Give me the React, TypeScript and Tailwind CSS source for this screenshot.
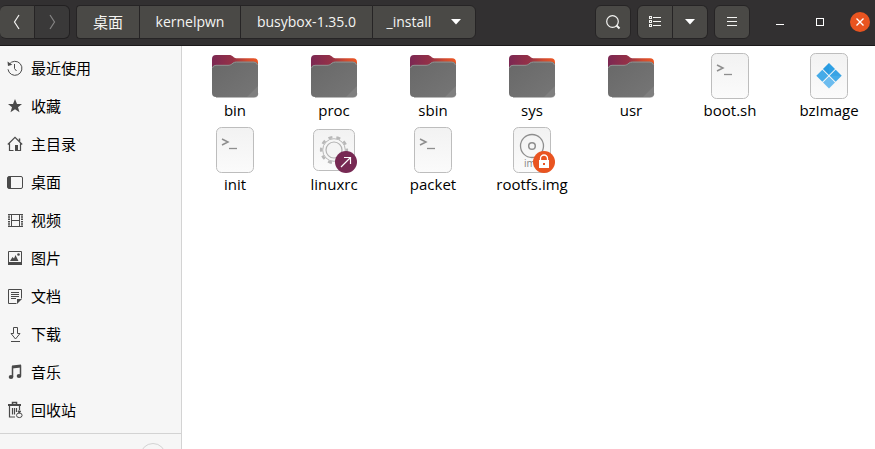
import React from "react";

type Kind = "folder" | "script" | "gear" | "disc" | "exe";

const files: { name: string; kind: Kind }[] = [
  { name: "bin", kind: "folder" },
  { name: "proc", kind: "folder" },
  { name: "sbin", kind: "folder" },
  { name: "sys", kind: "folder" },
  { name: "usr", kind: "folder" },
  { name: "boot.sh", kind: "script" },
  { name: "bzImage", kind: "exe" },
  { name: "init", kind: "script" },
  { name: "linuxrc", kind: "gear" },
  { name: "packet", kind: "script" },
  { name: "rootfs.img", kind: "disc" },
];

const crumbs = [
  { label: "桌面", style: "w-[63px] rounded-l-sm text-[15px]" },
  { label: "kernelpwn", style: "w-[101px]" },
  { label: "busybox-1.35.0", style: "w-[132px]" },
];

const fileGradients = (
  <svg className="absolute" width="0" height="0" aria-hidden="true">
    <defs>
      <linearGradient id="tab" x1="0" y1="0" x2="1" y2="0">
        <stop offset="0" stopColor="#7c2853" />
        <stop offset="0.45" stopColor="#963146" />
        <stop offset="0.75" stopColor="#d04a30" />
        <stop offset="1" stopColor="#ee5722" />
      </linearGradient>
      <linearGradient id="front" x1="0" y1="0" x2="1" y2="1">
        <stop offset="0" stopColor="#686868" />
        <stop offset="1" stopColor="#767676" />
      </linearGradient>
      <linearGradient id="paper" x1="0" y1="0" x2="0" y2="1">
        <stop offset="0" stopColor="#f2f2f2" />
        <stop offset="1" stopColor="#fbfbfb" />
      </linearGradient>
    </defs>
  </svg>
);

const Page = () => (
  <rect x="5.5" y="1.5" width="37" height="45" rx="5" fill="url(#paper)" stroke="#bdbdbd" />
);

function FileIcon({ kind }: { kind: Kind }) {
  return (
    <svg width="48" height="48" viewBox="0 0 48 48" aria-hidden="true" className="block">
      {kind === "folder" && (
        <>
          <path d="M5 3h13c2 0 3 .7 4 1.600l1 .9C24 6 24.500 6.300 26 6.300h17a4 4 0 0 1 4 4V28H1V7a4 4 0 0 1 4-4z" fill="url(#tab)" />
          <path d="M5 45.500h38a4 4 0 0 0 4-4" fill="none" stroke="#b9b9b9" />
          <path d="M5 13h12c2 0 3-.5 4-1.300l1-.9c1-.7 2-1 3.500-1H43a4 4 0 0 1 4 4V41a4 4 0 0 1-4 4H5a4 4 0 0 1-4-4V17a4 4 0 0 1 4-4z" fill="url(#front)" />
          <path d="M1.500 16A3.500 3.500 0 0 1 5 13.300h12c2 0 3-.6 4-1.400l1-.8c1-.7 2-1 3.500-1H43a4 4 0 0 1 3.500 3" fill="none" stroke="#919191" />
          <path d="M47 34v7a4 4 0 0 1-4 4h-7z" fill="#7f7f7f" />
        </>
      )}
      {kind === "script" && (
        <>
          <Page />
          <path d="M11 13l6 3-6 3" fill="none" stroke="#8e8e8e" strokeWidth="1.500" />
          <path d="M18 22.500h8" stroke="#8e8e8e" strokeWidth="1.300" />
        </>
      )}
      {kind === "exe" && (
        <>
          <Page />
          <path d="M24 11l6 6-6 6-6-6z" fill="#2ea0e4" />
          <path d="M17.300 17.700l6 6-6 6-6-6z" fill="#45abe8" />
          <path d="M30.700 17.700l6 6-6 6-6-6z" fill="#45abe8" />
          <path d="M24 24.400l6 6-6 6-6-6z" fill="#6cbcef" />
          <path d="M24 11v12l-6-6zM30.700 17.700l-6 6h12z" fill="#1e93da" opacity=".3" />
        </>
      )}
      {kind === "gear" && (
        <>
          <rect x="3.500" y="3.500" width="41" height="41" rx="5" fill="url(#paper)" stroke="#bdbdbd" />
          <circle cx="24" cy="24" r="12.800" fill="none" stroke="#b8b8b8" strokeWidth="2.600" strokeDasharray="4 4.042" strokeDashoffset="2" />
          <circle cx="24" cy="24" r="11.300" fill="#f6f6f6" stroke="#b8b8b8" strokeWidth="1" />
          <circle cx="24" cy="24" r="8" fill="#f4f4f4" stroke="#b3b3b3" strokeWidth="1.200" />
          <circle cx="36" cy="36" r="11" fill="#772953" />
          <path d="M31 41l9.500-9.500M34 31.500h6.500V38" fill="none" stroke="#fff" strokeWidth="1.200" />
        </>
      )}
      {kind === "disc" && (
        <>
          <Page />
          <circle cx="24" cy="20" r="11.500" fill="none" stroke="#8e8e8e" strokeWidth="1.300" />
          <circle cx="24" cy="20" r="3.300" fill="none" stroke="#8e8e8e" strokeWidth="1.500" />
          <text x="16" y="41" fontSize="10" fill="#858585" fontFamily="Open Sans, sans-serif">img</text>
          <circle cx="36" cy="36" r="11" fill="#e95420" />
          <rect x="31" y="34" width="10" height="8" fill="#fff" />
          <path d="M32.500 34v-1.500a3.500 3.500 0 0 1 7 0V34" fill="none" stroke="#fff" strokeWidth="1.300" />
          <rect x="35" y="37" width="2" height="2" fill="#e95420" />
        </>
      )}
    </svg>
  );
}

const places: { label: string; icon: React.ReactNode }[] = [
  {
    label: "最近使用",
    icon: (
      <>
        <path d="M2.200 4.300A7 7 0 1 1 1 9.300" />
        <path d="M7.500 4v4.500l2 2.500" />
        <path d="M.5 1.500L1 6l4.300-1.300z" fill="#4a4a4a" stroke="none" />
      </>
    ),
  },
  {
    label: "收藏",
    icon: <path d="M8 1l2 5h5l-4 3.200 1.500 5L8 11.200l-4.500 3 1.500-5L1 6h5z" fill="#4a4a4a" stroke="none" />,
  },
  {
    label: "主目录",
    icon: (
      <>
        <path d="M.8 8.500L8 1.300l7.200 7.200M2.500 7.500v7h4M13.500 7.500v7H10" strokeWidth="1.200" />
        <path d="M12.500 2.500v3" strokeWidth="1.500" />
        <path d="M8 9h3v6H8z" fill="#4a4a4a" stroke="none" />
      </>
    ),
  },
  {
    label: "桌面",
    icon: (
      <>
        <rect x=".5" y="2.500" width="15" height="12" rx="1.500" />
        <path d="M1 3h3v11H1z" fill="#4a4a4a" stroke="none" />
      </>
    ),
  },
  {
    label: "视频",
    icon: (
      <>
        <path d="M4.500 2v13M12.500 2v13M1 2.500h15M1 14.500h15M4.500 8.500h8" />
        <path d="M2 2v13M15 2v13" strokeWidth="2" strokeDasharray="1.500 .8" />
      </>
    ),
  },
  {
    label: "图片",
    icon: (
      <>
        <path d="M1.500 1.500h13v12h-13z" />
        <path d="M1 12h14v3H1zM3 11l2.500-4 1.500 1.500L8.500 5l3 6z" fill="#4a4a4a" stroke="none" />
        <circle cx="11.500" cy="4.500" r="1.300" fill="#4a4a4a" stroke="none" />
      </>
    ),
  },
  {
    label: "文档",
    icon: (
      <>
        <path d="M9.500 15.500h-8v-14h13v9M4 4.500h8M4 6.500h8M4 8.500h8M4 10.500h5" />
        <path d="M10 11h5l-5 5z" fill="#4a4a4a" stroke="none" />
      </>
    ),
  },
  {
    label: "下载",
    icon: <path d="M6.500 1.500h4v6H13L8.500 13 4 7.500h2.500zM4 15.500h9" />,
  },
  {
    label: "音乐",
    icon: (
      <>
        <path d="M5.500 13V3l8-1v9.500" strokeWidth="1.500" />
        <path d="M5 1.500l9-1v3l-9 1z" fill="#4a4a4a" stroke="none" />
        <ellipse cx="4" cy="13" rx="2.300" ry="2" fill="#4a4a4a" stroke="none" />
        <ellipse cx="12" cy="12" rx="2.300" ry="2" fill="#4a4a4a" stroke="none" />
      </>
    ),
  },
  {
    label: "回收站",
    icon: (
      <>
        <path d="M5.500 2.500v-2h4v2" strokeWidth="1.500" />
        <path d="M1 2h13v2H1z" fill="#4a4a4a" stroke="none" />
        <path d="M2.500 4v11H8M12.500 4v4M5.500 6v6.500M7.500 6v6.500M9.500 6v4" strokeWidth="1.200" />
        <ellipse cx="12.300" cy="13.300" rx="2.800" ry="2.300" fill="#f6f6f6" />
        <path d="M11 9h2.600l-1.300 2.300z" fill="#4a4a4a" />
      </>
    ),
  },
];

const headerButton =
  "flex h-[34px] items-center justify-center border border-[#262425] bg-[#4a4946] text-[#f4f4f2]";

function Caret() {
  return (
    <svg width="10" height="6" viewBox="0 0 10 6" aria-hidden="true">
      <path d="M0 0h10L5 5.500z" fill="#fff" />
    </svg>
  );
}

export default function App() {
  return (
    <div className="flex h-screen flex-col overflow-hidden bg-white font-['Open_Sans','Noto_Sans_CJK_SC',sans-serif] text-[14px] leading-5 text-black">
      {fileGradients}
      <header className="flex h-[46px] shrink-0 items-start border-b border-[#1b191a] bg-[#323031] pt-[5px] pr-[5px]">
        <div className="flex">
          <button aria-label="后退" className={`${headerButton} w-[35px] rounded-l-md border-l-0`}>
            <svg width="8" height="16" viewBox="0 0 8 16" fill="none" stroke="currentColor" strokeWidth="1.200" aria-hidden="true">
              <path d="M6 1L1.500 8 6 15" />
            </svg>
          </button>
          <button aria-label="前进" disabled className="flex h-[34px] w-[35px] items-center justify-center rounded-r-md border border-l-0 border-[#222021] bg-[#3a3939] text-[#858484]">
            <svg width="8" height="16" viewBox="0 0 8 16" fill="none" stroke="currentColor" strokeWidth="1.200" aria-hidden="true">
              <path d="M2 1l4.500 7L2 15" />
            </svg>
          </button>
        </div>
        <nav aria-label="路径" className="ml-1.5 flex">
          {crumbs.map((c) => (
            <button key={c.label} className={`${headerButton} ${c.style} border-r-0`}>
              {c.label}
            </button>
          ))}
          <button className={`${headerButton} w-[104px] gap-5 rounded-r-md`}>
            _install
            <Caret />
          </button>
        </nav>
        <div className="ml-auto flex gap-1.5">
          <button aria-label="搜索" className={`${headerButton} w-9 rounded-md`}>
            <svg width="16" height="16" viewBox="0 0 16 16" fill="none" stroke="currentColor" aria-hidden="true">
              <circle cx="7.500" cy="7.500" r="5.800" strokeWidth="1.200" />
              <path d="M11.500 11.500l3 3" strokeWidth="2" />
            </svg>
          </button>
          <div className="flex">
            <button aria-label="列表视图" className={`${headerButton} w-9 rounded-l-md`}>
              <svg width="14" height="14" viewBox="0 0 14 14" fill="none" stroke="currentColor" shapeRendering="crispEdges" aria-hidden="true">
                <path d="M1.500 1.500h2v2h-2zM1.500 5.500h2v2h-2zM1.500 9.500h2v2h-2zM5 2.500h8M5 6.500h8M5 10.500h8" />
              </svg>
            </button>
            <button aria-label="视图选项" className={`${headerButton} w-[35px] rounded-r-md border-l-0`}>
              <Caret />
            </button>
          </div>
          <button aria-label="菜单" className={`${headerButton} w-9 rounded-md`}>
            <svg width="10" height="10" viewBox="0 0 10 10" stroke="currentColor" shapeRendering="crispEdges" aria-hidden="true">
              <path d="M0 .5h10M0 4.500h10M0 8.500h10" />
            </svg>
          </button>
        </div>
        <div className="ml-5 flex h-[34px] items-center gap-5">
          <button aria-label="最小化" className="flex size-5 items-center justify-center">
            <svg width="8" height="8" viewBox="0 0 8 8" stroke="#fff" shapeRendering="crispEdges" aria-hidden="true">
              <path d="M0 6.500h8" />
            </svg>
          </button>
          <button aria-label="最大化" className="flex size-5 items-center justify-center">
            <svg width="8" height="8" viewBox="0 0 8 8" fill="none" stroke="#fff" shapeRendering="crispEdges" aria-hidden="true">
              <path d="M.5.5h7v7h-7z" />
            </svg>
          </button>
          <button aria-label="关闭" className="flex size-5 items-center justify-center rounded-full bg-[#e95420]">
            <svg width="8" height="8" viewBox="0 0 8 8" stroke="#fff" strokeWidth="1.400" aria-hidden="true">
              <path d="M.5.5l7 7M7.500.5l-7 7" />
            </svg>
          </button>
        </div>
      </header>

      <div className="flex min-h-0 flex-1">
        <aside className="w-[182px] shrink-0 overflow-hidden border-r border-[#d3d3d3] bg-[#f6f6f6] pt-[3px]">
          <ul>
            {places.map((p) => (
              <li key={p.label}>
                <a href="#" className="flex h-[38px] items-center gap-2 pl-[7px] text-[15px]">
                  <svg width="16" height="16" viewBox="0 0 16 16" fill="none" stroke="#4a4a4a" className="overflow-visible" aria-hidden="true">
                    {p.icon}
                  </svg>
                  {p.label}
                </a>
              </li>
            ))}
          </ul>
          <div className="mt-1 flex justify-end border-t border-[#d3d3d3] pt-[9px] pr-[15px]">
            <button aria-label="弹出" className="size-[26px] rounded-full border border-[#d3d3d3]" />
          </div>
        </aside>
        <main className="min-w-0 flex-1 overflow-hidden pt-1.5 pl-[13px]">
          <ul className="grid grid-cols-[repeat(auto-fill,80px)] gap-x-[19px] gap-y-1.5 text-[15px]">
            {files.map((f) => (
              <li key={f.name} className="flex flex-col items-center">
                <FileIcon kind={f.kind} />
                <span>{f.name}</span>
              </li>
            ))}
          </ul>
        </main>
      </div>
    </div>
  );
}
